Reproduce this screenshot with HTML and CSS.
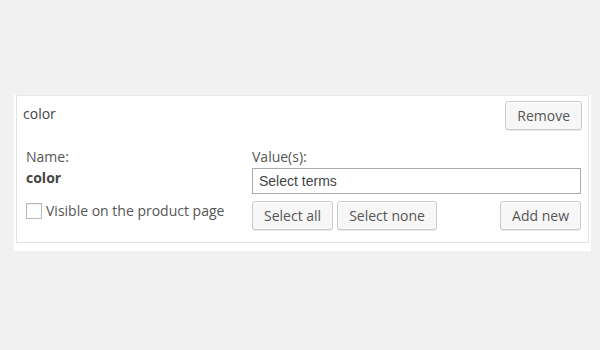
FILE: index.html
```html
<!DOCTYPE html>
<html>
<head>
	<title>Attributes</title>
	<link rel="stylesheet" href="styles.css">
</head>
<body>
	<div class="panel">
		<div class="attribute">
			<div class="attribute-head">
				<strong class="attribute-name">color</strong>
				<button class="button">Remove</button>
			</div>
			<div class="attribute-body">
				<div class="col-name">
					<label class="field-label">Name:</label>
					<div class="name-value">color</div>
					<label class="visible-check"><span class="checkbox"></span>Visible on the product page</label>
				</div>
				<div class="col-values">
					<label class="field-label">Value(s):</label>
					<div class="terms-input">Select terms</div>
					<div class="terms-actions">
						<button class="button">Select all</button>
						<button class="button">Select none</button>
						<button class="button push-right">Add new</button>
					</div>
				</div>
			</div>
		</div>
	</div>
</body>
</html>
```

FILE: styles.css
```css
body {
	margin:0;
	background:#f1f1f1;
	font-family:"Open Sans", "Liberation Sans", sans-serif;
	font-size:14px;
	color:#444;
}
.panel {
	width:577px;
	margin:95px 0 0 14px;
	padding:0 2px 8px 2px;
	box-sizing:border-box;
	background:#fff;
}
.attribute {
	border:1px solid #e2e2e2;
	border-top-color:#e8e8e8;
}
.attribute-head {
	display:flex;
	align-items:center;
	justify-content:space-between;
	padding:5px 6px 0 6px;
}
.attribute-name {
	font-weight:normal;
	color:#444;
	line-height:18px;
	margin-top:-3px;
}
.button {
	font-family:"Open Sans", "Liberation Sans", sans-serif;
	font-size:14px;
	color:#555;
	background:#f7f7f7;
	border:1px solid #cccccc;
	border-radius:3px;
	box-shadow:inset 0 1px 0 #fff, 0 1px 0 rgba(0,0,0,.08);
	height:29px;
	padding:0 11px;
	line-height:26px;
	margin:0;
	cursor:pointer;
}
.attribute-body {
	display:flex;
	padding:18px 7px 12px 9px;
}
.col-name {
	width:226px;
	color:#555;
}
.field-label {
	display:block;
	line-height:18px;
	color:#555;
}
.name-value {
	font-weight:bold;
	line-height:18px;
	margin-top:3px;
	color:#444;
}
.visible-check {
	display:flex;
	align-items:center;
	margin-top:15px;
	line-height:18px;
}
.checkbox {
	width:16px;
	height:16px;
	box-sizing:border-box;
	border:1px solid #b4b9be;
	background:#fff;
	box-shadow:inset 0 1px 2px rgba(0,0,0,.07);
	margin-right:4px;
}
.col-values {
	flex:1;
}
.terms-input {
	margin-top:2px;
	height:26px;
	box-sizing:border-box;
	border:1px solid #aaa;
	padding:0 6px;
	line-height:24px;
	font-family:"Liberation Sans", Arial, sans-serif;
	font-size:14px;
	color:#444;
	background:#fff;
}
.terms-actions {
	display:flex;
	gap:4px;
	margin-top:7px;
}
.push-right {
	margin-left:auto;
}
```
